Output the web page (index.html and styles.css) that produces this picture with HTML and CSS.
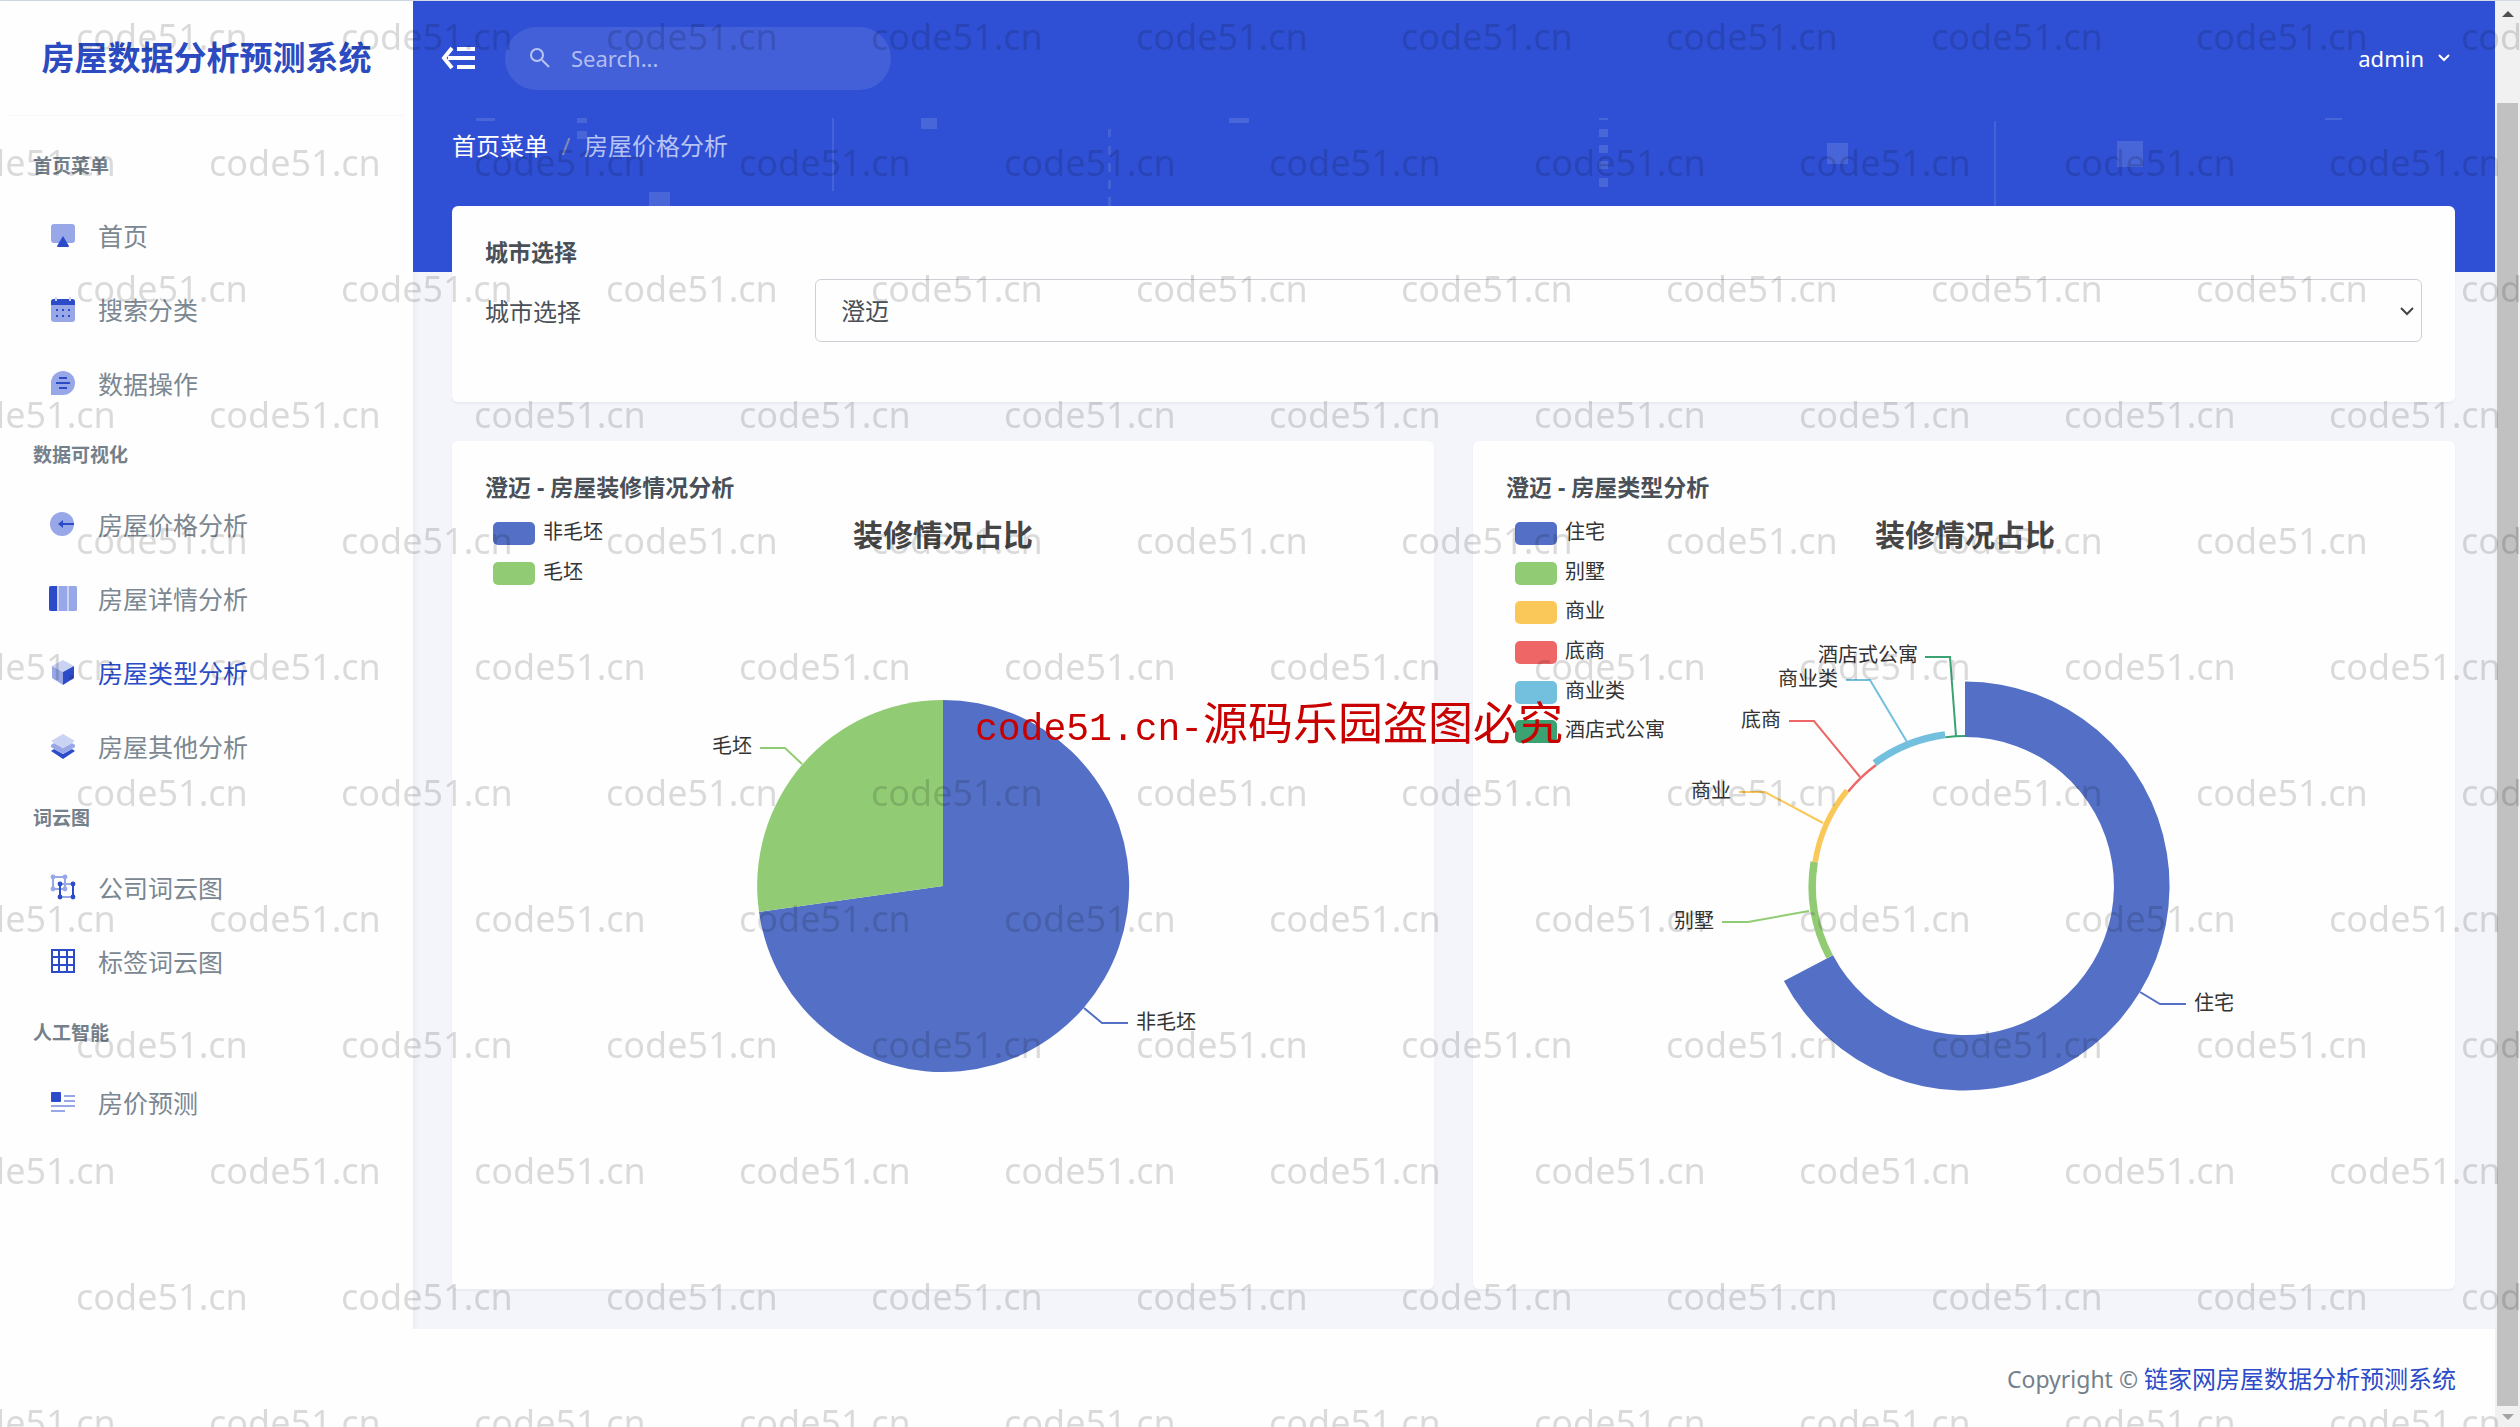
FILE: index.html
```html
<!DOCTYPE html>
<html lang="zh-CN">
<head>
<meta charset="utf-8">
<title>房屋数据分析预测系统</title>
<link rel="stylesheet" href="styles.css">
</head>
<body>
<div class="app">
  <aside class="sidebar">
    <div class="brand"><a href="#">房屋数据分析预测系统</a></div>
    <nav class="menu">
      <h2 class="menu-heading">首页菜单</h2>
      <a class="menu-item" href="#"><svg class="icon" viewBox="0 0 28 28"><rect class="soft" x="2" y="3" width="24" height="19" rx="3"/><path class="deep" d="M14 15 20 25a1 1 0 0 1-1 1H9a1 1 0 0 1-1-1z"/></svg>首页</a>
      <a class="menu-item" href="#"><svg class="icon" viewBox="0 0 28 28"><rect class="soft" x="2" y="4" width="24" height="23" rx="3"/><path class="deep" d="M2 10V7a3 3 0 0 1 3-3h18a3 3 0 0 1 3 3v3z"/><path class="pale" d="M6 2h2v4H6zM20 2h2v4h-2z"/><path class="deep" d="M7 14h2v2H7zM13 14h2v2h-2zM19 14h2v2h-2zM7 20h2v2H7zM13 20h2v2h-2zM19 20h2v2h-2z"/></svg>搜索分类</a>
      <a class="menu-item" href="#"><svg class="icon" viewBox="0 0 28 28"><path class="soft" d="M2 26V14A12 12 0 1 1 14 26z"/><path class="stroke" d="M10 9h8M7 14h14M10 19h8"/></svg>数据操作</a>
      <h2 class="menu-heading">数据可视化</h2>
      <a class="menu-item" href="#"><svg class="icon" viewBox="0 0 28 28"><circle class="soft" cx="13" cy="14" r="12"/><path class="deep" d="M9 14l5-4v3h11v2H14v3z"/></svg>房屋价格分析</a>
      <a class="menu-item" href="#"><svg class="icon" viewBox="0 0 28 28"><rect class="pale" x="0" y="2" width="28" height="25"/><path class="deep" d="M2 2h6v25H2a2 2 0 0 1-2-2V4a2 2 0 0 1 2-2z"/><path class="soft" d="M10 2h8v25h-8zM20 2h6a2 2 0 0 1 2 2v21a2 2 0 0 1-2 2h-6z"/></svg>房屋详情分析</a>
      <a class="menu-item active" href="#"><svg class="icon" viewBox="0 0 28 28"><path class="pale" d="M14 2 25 8 14 14 3 8z"/><path class="soft" d="M3 8l11 6v13L3 20z"/><path class="deep" d="M25 8v12l-11 7V14z"/></svg>房屋类型分析</a>
      <a class="menu-item" href="#"><svg class="icon" viewBox="0 0 28 28"><path class="deep" d="M2 19l3-2 9 5 9-5 3 2-12 8z"/><path class="soft" d="M2 13l3-2 9 5 9-5 3 2v2l-12 7-12-7z"/><path class="pale" d="M14 2 26 9 14 16 2 9z"/></svg>房屋其他分析</a>
      <h2 class="menu-heading">词云图</h2>
      <a class="menu-item" href="#"><svg class="icon" viewBox="0 0 28 28"><path class="soft-line" d="M4 4h12v12H4z"/><g class="soft"><circle cx="4" cy="4" r="2.4"/><circle cx="16" cy="4" r="2.4"/><circle cx="4" cy="16" r="2.4"/><circle cx="16" cy="16" r="2.4"/></g><path class="soft-line" d="M11 11h13v13H11z"/><path class="stroke" d="M11 11v13M24 11v13"/><g class="deep"><circle cx="11" cy="11" r="2.4"/><circle cx="24" cy="11" r="2.4"/><circle cx="11" cy="24" r="2.4"/><circle cx="24" cy="24" r="2.4"/></g></svg>公司词云图</a>
      <a class="menu-item" href="#"><svg class="icon" viewBox="0 0 28 28"><path class="stroke" d="M3 3h22v22H3zM3 10h22M3 18h22M10 3v22M18 3v22"/></svg>标签词云图</a>
      <h2 class="menu-heading">人工智能</h2>
      <a class="menu-item" href="#"><svg class="icon" viewBox="0 0 28 28"><rect class="deep" x="2" y="4" width="10" height="10" rx="1"/><path class="soft-line" d="M15 8h11M15 13h11M2 18h24M2 23h14"/></svg>房价预测</a>
    </nav>
  </aside>

  <div class="main">
    <svg class="banner-art" viewBox="0 0 2082 272" preserveAspectRatio="none" aria-hidden="true">
      <path d="M63 117h19v3H63zM164 117h10v5h-10zM164 130h10v8h-10zM236 191h21v20h-21zM508 117h16v11h-16zM816 117h20v5h-20zM1186 117h9v2h-9zM1186 128h9v8h-9zM1186 144h9v8h-9zM1186 160h9v8h-9zM1186 177h9v9h-9zM1414 142h21v21h-21zM1704 140h26v26h-26zM1912 117h17v2h-17z"/>
      <path class="faint" d="M419 117h2v73h-2zM695 128h3v8h-3zM695 145h3v9h-3zM695 162h3v9h-3zM695 179h3v9h-3zM695 196h3v9h-3zM1581 120h2v86h-2z"/>
    </svg>
    <header class="topbar">
      <button class="toggle" type="button" aria-label="收起菜单"><svg viewBox="0 0 36 26"><path d="M11 3 3 13l8 10M7 13h27M16 4h18M16 22h18"/></svg></button>
      <label class="search">
        <svg viewBox="0 0 24 24"><circle cx="9" cy="9" r="6"/><path d="M14 14l7 7"/></svg>
        <input type="search" placeholder="Search..." aria-label="Search">
      </label>
      <button class="user" type="button">admin<svg viewBox="0 0 14 10"><path d="M2 2l5 5 5-5"/></svg></button>
    </header>
    <nav class="crumbs"><a href="#">首页菜单</a><span class="slash">/</span><span class="current">房屋价格分析</span></nav>

    <main class="content">
      <section class="card filter">
        <h3 class="card-title">城市选择</h3>
        <div class="field">
          <label for="city">城市选择</label>
          <div class="select-wrap">
            <select id="city"><option>澄迈</option></select>
            <svg viewBox="0 0 16 10"><path d="M2 2l6 6 6-6"/></svg>
          </div>
        </div>
      </section>
      <div class="charts">
        <section class="card chart">
          <h3 class="card-title">澄迈 - 房屋装修情况分析</h3>
          <svg class="plot" viewBox="485 510 916 746">
            <text class="plot-title" x="943" y="546">装修情况占比</text>
            <rect class="c1" x="493" y="522" width="42" height="23" rx="5"/><text x="543" y="539">非毛坯</text>
            <rect class="c2" x="493" y="562" width="42" height="23" rx="5"/><text x="543" y="579">毛坯</text>
            <path class="c1" d="M943 886V700A186 186 0 1 1 759 912z"/>
            <path class="c2" d="M943 886 759 912A186 186 0 0 1 943 700z"/>
            <path class="l2" d="M802 764 785 748H760"/><text class="end" x="752" y="753">毛坯</text>
            <path class="l1" d="M1084 1008 1102 1023H1128"/><text x="1136" y="1029">非毛坯</text>
          </svg>
        </section>
        <section class="card chart">
          <h3 class="card-title">澄迈 - 房屋类型分析</h3>
          <svg class="plot" viewBox="1506 510 916 746">
            <text class="plot-title" x="1965" y="546">装修情况占比</text>
            <rect class="c1" x="1515" y="522" width="42" height="23" rx="5"/><text x="1565" y="539">住宅</text>
            <rect class="c2" x="1515" y="562" width="42" height="23" rx="5"/><text x="1565" y="579">别墅</text>
            <rect class="c3" x="1515" y="601" width="42" height="23" rx="5"/><text x="1565" y="618">商业</text>
            <rect class="c4" x="1515" y="641" width="42" height="23" rx="5"/><text x="1565" y="658">底商</text>
            <rect class="c5" x="1515" y="681" width="42" height="23" rx="5"/><text x="1565" y="698">商业类</text>
            <rect class="c6" x="1515" y="720" width="42" height="23" rx="5"/><text x="1565" y="737">酒店式公寓</text>
            <g transform="translate(1965 886)">
              <path class="c1" d="M0-204.5A204.5 204.5 0 1 1-181.1 94.9L-132 69.2A149 149 0 1 0 0-149z"/>
              <path class="c2" d="M-138.6 72.6A156.5 156.5 0 0 1-154.5-24.8L-147.1-23.6A149 149 0 0 0-132 69.2z"/>
              <path class="c3" d="M-152.6-24.4A154.5 154.5 0 0 1-120.1-97.2L-115.8-93.8A149 149 0 0 0-147.1-23.6z"/>
              <path class="c4" d="M-117.7-95.3A151.5 151.5 0 0 1-89.7-122.1L-88.2-120.1A149 149 0 0 0-115.8-93.8z"/>
              <path class="c5" d="M-92.4-125.7A156 156 0 0 1-20.4-154.7L-19.4-147.7A149 149 0 0 0-88.2-120.1z"/>
              <path class="c6" d="M-19.7-149.7A151 151 0 0 1 0-151V-149A149 149 0 0 0-19.4-147.7z"/>
            </g>
            <path class="l6" d="M1956 736 1950 657H1925"/><text class="end" x="1918" y="662">酒店式公寓</text>
            <path class="l5" d="M1907 742 1870 680H1846"/><text class="end" x="1838" y="686">商业类</text>
            <path class="l4" d="M1860 777 1814 721H1789"/><text class="end" x="1781" y="727">底商</text>
            <path class="l3" d="M1823 823 1765 792H1739"/><text class="end" x="1731" y="798">商业</text>
            <path class="l2" d="M1809 911 1748 922H1722"/><text class="end" x="1714" y="928">别墅</text>
            <path class="l1" d="M2140 992 2160 1004H2186"/><text x="2194" y="1010">住宅</text>
          </svg>
        </section>
      </div>
    </main>
    <footer class="footer">Copyright © <a href="#">链家网房屋数据分析预测系统</a></footer>
  </div>

  <div class="scrollbar" aria-hidden="true">
    <svg viewBox="0 0 12 6"><path d="M6 0l6 6H0z"/></svg>
    <div class="thumb"></div>
    <svg class="down" viewBox="0 0 12 6"><path d="M0 0h12L6 6z"/></svg>
  </div>
</div>
<div class="watermark" id="watermark" aria-hidden="true"></div>
<p class="notice"><span>code51.cn-</span>源码乐园盗图必究</p>
<script src="watermark.js"></script>
</body>
</html>
```
FILE: watermark.js
```javascript
const layer = document.getElementById('watermark');
const rows = Math.ceil(window.innerHeight / 126) + 1;
const columns = Math.ceil(window.innerWidth / 265) + 1;
for (let r = 0; r < rows; r++) {
  const row = document.createElement('div');
  row.className = 'watermark-row';
  for (let c = 0; c < columns; c++) {
    const mark = document.createElement('span');
    mark.textContent = 'code51.cn';
    row.append(mark);
  }
  layer.append(row);
}
```
FILE: styles.css
```css
* { box-sizing: border-box; }
body {
  margin: 0;
  background: #f4f5fa;
  color: #495057;
  font-family: "Noto Sans", "Noto Sans CJK SC", sans-serif;
  font-size: 24px;
}
a { color: inherit; text-decoration: none; }
button { border: 0; padding: 0; background: none; font: inherit; color: inherit; }
h2, h3, p { margin: 0; }

.app {
  display: grid;
  grid-template-columns: 413px minmax(0, 1fr) 25px;
  min-height: 100vh;
  border-top: 1px solid #d5dbe5;
}

.sidebar { background: #fefefe; box-shadow: 0 0 8px rgba(30, 60, 90, .08); }
.brand {
  margin: 0 8px;
  height: 115px;
  padding-bottom: 4px;
  border-bottom: 1px solid #f8f8fa;
  display: flex;
  align-items: center;
  justify-content: center;
  color: #2c4bc0;
  font-size: 33px;
  font-weight: 700;
}
.menu { padding-top: 17px; }
.menu-heading {
  height: 67px;
  padding-left: 33px;
  line-height: 67px;
  font-size: 19px;
  font-weight: 700;
  color: #74808a;
}
.menu-item {
  display: flex;
  align-items: center;
  gap: 21px;
  height: 74px;
  padding: 0 0 5px 49px;
  font-size: 25px;
  color: #7b8791;
}
.menu-item.active { color: #2c4bc8; }
.icon { width: 28px; height: 28px; }
.soft { fill: #97a7e8; }
.deep { fill: #2c4bc8; }
.pale { fill: #cbd3f4; }
.stroke { fill: none; stroke: #2c4bc8; stroke-width: 2; }
.soft-line { fill: none; stroke: #97a7e8; stroke-width: 2; }

.main {
  position: relative;
  display: flex;
  flex-direction: column;
  background: linear-gradient(#2f50d4, #2f50d4) 0 0 / 100% 271px no-repeat;
}
.banner-art { position: absolute; top: 0; left: 0; width: 100%; height: 272px; fill: rgba(255, 255, 255, .13); }
.banner-art .faint { fill: rgba(255, 255, 255, .1); }
.topbar {
  position: relative;
  display: flex;
  align-items: center;
  height: 116px;
  padding: 0 44px 2px 28px;
  color: #fff;
  font-size: 22px;
}
.topbar svg { fill: none; stroke: currentColor; }
.toggle svg { display: block; width: 36px; height: 26px; stroke-width: 4; }
.search {
  display: flex;
  align-items: center;
  gap: 19px;
  width: 386px;
  height: 63px;
  margin-left: 28px;
  padding-left: 23px;
  border-radius: 32px;
  background: #4360d9;
  color: #b9c5f2;
}
.search svg { width: 24px; height: 24px; stroke-width: 2; }
.search input { width: 280px; border: 0; padding: 0; outline: 0; background: none; font: inherit; color: #fff; }
.search input::placeholder { color: #b1bdf0; opacity: 1; }
.user { display: flex; align-items: center; gap: 13px; margin-left: auto; }
.user svg { width: 14px; height: 10px; stroke-width: 2; }

.crumbs {
  position: relative;
  display: flex;
  height: 89px;
  padding: 11px 39px 0;
  line-height: 36px;
  color: #fff;
}
.slash { width: 36px; text-align: center; color: #7f8cb5; }
.current { color: #b7c3f3; }

.content {
  position: relative;
  display: grid;
  gap: 39px;
  padding: 0 40px 40px 39px;
}
.card {
  padding: 32px 33px;
  border-radius: 6px;
  background: #fefefe;
  box-shadow: 0 2px 2px rgba(40, 50, 90, .05);
}
.card-title { line-height: 28px; font-size: 23px; font-weight: 700; color: #495057; }
.filter { padding-bottom: 60px; }
.filter .card-title { margin-bottom: 13px; }
.field { display: grid; grid-template-columns: 330px 1fr; align-items: center; }
.select-wrap { position: relative; }
.select-wrap select {
  display: block;
  width: 100%;
  height: 63px;
  padding: 0 25px;
  appearance: none;
  border: 1px solid #ccd0d6;
  border-radius: 6px;
  background: #fefefe;
  color: #495057;
  font: inherit;
}
.select-wrap svg {
  position: absolute;
  right: 7px;
  top: 27px;
  width: 16px;
  height: 10px;
  fill: none;
  stroke: #444;
  stroke-width: 2;
  pointer-events: none;
}
.charts { display: grid; grid-template-columns: 1fr 1fr; gap: 39px; }
.chart { padding-bottom: 33px; }
.chart .card-title { margin-bottom: 9px; }
.plot { display: block; width: 100%; font-size: 20px; fill: #333; }
.plot-title { font-size: 30px; font-weight: 700; fill: #464646; text-anchor: middle; }
.end { text-anchor: end; }
.c1 { fill: #5470c6; }
.c2 { fill: #91cc75; }
.c3 { fill: #fac858; }
.c4 { fill: #ee6666; }
.c5 { fill: #73c0de; }
.c6 { fill: #3ba272; }
.l1, .l2, .l3, .l4, .l5, .l6 { fill: none; stroke-width: 2; }
.l1 { stroke: #5470c6; }
.l2 { stroke: #91cc75; }
.l3 { stroke: #fac858; }
.l4 { stroke: #ee6666; }
.l5 { stroke: #73c0de; }
.l6 { stroke: #3ba272; }

.footer {
  flex: 1;
  padding: 32px 39px;
  background: #fefefe;
  text-align: right;
  line-height: 36px;
  font-size: 23px;
  color: #74808a;
}
.footer a { font-size: 24px; color: #2c4bc8; }

.scrollbar {
  display: flex;
  flex-direction: column;
  align-items: center;
  padding: 10px 2px 9px;
  background: #f1f1f1;
}
.scrollbar svg { width: 12px; height: 6px; fill: #505050; }
.scrollbar .down { fill: #a3a3a3; }
.thumb { flex: 1; width: 21px; margin: 86px 0 8px; background: #c1c1c1; }

.watermark {
  position: fixed;
  inset: 0;
  overflow: hidden;
  pointer-events: none;
  font-family: "Noto Sans", sans-serif;
  font-size: 36px;
  line-height: 126px;
  color: rgba(0, 0, 0, .14);
}
.watermark-row { display: flex; height: 126px; margin-left: 76px; }
.watermark-row:first-child { margin-top: -26px; }
.watermark-row:nth-child(even) { margin-left: -56px; }
.watermark-row span { flex: 0 0 265px; }
.notice {
  position: absolute;
  left: 975px;
  top: 687px;
  line-height: 68px;
  white-space: nowrap;
  font-family: "Noto Sans CJK SC", sans-serif;
  font-size: 45px;
  color: #c80000;
  pointer-events: none;
}
.notice span { font-family: "Liberation Mono", monospace; font-size: 38px; }
```
